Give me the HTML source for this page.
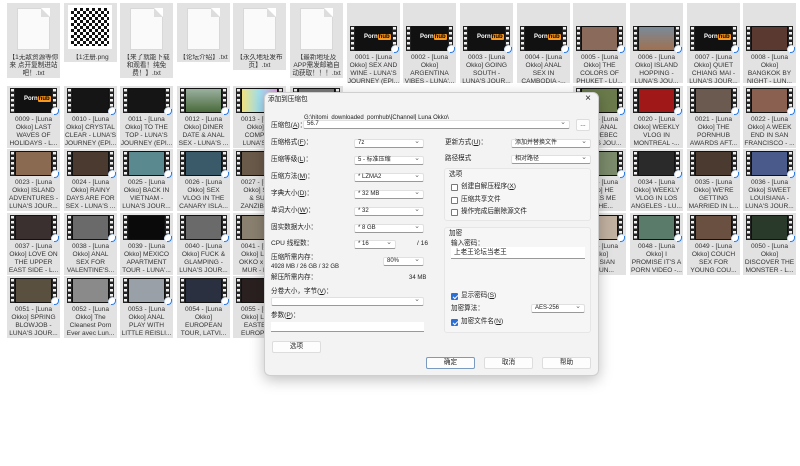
<!DOCTYPE html>
<html><head><meta charset="utf-8">
<style>
*{box-sizing:border-box}
body{margin:0;width:800px;height:466px;background:#fff;position:relative;overflow:hidden;font-family:"Liberation Sans","Noto Sans CJK SC",sans-serif;color:#333}
.t{position:absolute;width:53px;height:62px;background:#e2e2e2}
.th{position:absolute;left:3px;top:2px;width:47px;height:25px;background:#111}
.th:before,.th:after{content:"";position:absolute;top:0;width:5px;height:25px;background:#222 repeating-linear-gradient(to bottom,#222 0 1px,#eee 1px 3.5px,#222 3.5px 5px) no-repeat;background-size:3px 25px;background-position:1px 0}
.th:before{left:0}.th:after{right:0}
.th i{position:absolute;left:6px;right:6px;top:1px;bottom:1px}
.b{position:absolute;right:-3px;bottom:-3px;width:9px;height:9px;border-radius:50%;background:#fff;border:1px solid #cfe0f5;z-index:2}
.b:after{content:"";position:absolute;left:2px;top:1px;width:4px;height:5px;border-radius:0 0 4px 0;border:1.5px solid #2e7be0;border-left:none;border-top:none}
.ph{position:absolute;left:14px;top:8px;font:bold 6px "Liberation Sans",sans-serif;color:#fff}
.ph b{background:#f7971d;color:#000;padding:0 1px;border-radius:1px}
.t p{position:absolute;top:30px;left:0;width:53px;margin:0;text-align:center;font-size:6.6px;line-height:8px;white-space:nowrap;overflow:hidden}
.r1 .th{top:23px}.r1 p{top:51px}.r1{height:80px}
.doc{position:absolute;left:10px;top:5px;width:33px;height:42px;background:#fafafa;border:1px solid #d8d8d8}
.doc:after{content:"";position:absolute;right:-1px;top:-1px;border-style:solid;border-width:0 9px 9px 0;border-color:#fff #fff #ddd #ddd}
.dg{position:absolute;left:264px;top:92px;width:335px;height:284px;background:#f3f3f3;border:1px solid #cfcfcf;border-radius:6px;box-shadow:0 4px 14px rgba(0,0,0,.25);font-size:6.6px;color:#222;z-index:10}
.dg span,.dg div{position:absolute}
.l{white-space:nowrap;line-height:8px;margin-top:-3px}
.dd{height:9px;background:#fff;border:1px solid #e0e0e0;border-bottom-color:#999;border-radius:2px;padding-left:3px;line-height:7px;font-size:6px}
.dd:after{content:"⌄";position:absolute;right:3px;top:-2px;font-size:7px;color:#666}
.btn{height:12px;background:#fdfdfd;border:1px solid #ddd;border-radius:2px;text-align:center;line-height:10px}
.grp{border:1px solid #e6e6e6;border-radius:3px;background:#f6f6f6}
.cb{width:7px;height:7px;border:1px solid #777;border-radius:1px;background:#fff}
.cb.on{background:#2b6fd6;border-color:#2b6fd6}
.cb.on:after{content:"";position:absolute;left:1.5px;top:0;width:2px;height:4px;border:solid #fff;border-width:0 1px 1px 0;transform:rotate(45deg)}
</style></head><body>

<div class="t" style="left:7px;top:3px;height:75px"><div class="doc"></div><p style="top:51px">【1无敌资源等你<br>来 点开复制进站<br>吧！.txt</p></div>
<div class="t" style="left:64px;top:3px;height:59px"><div style="position:absolute;left:4px;top:2px;width:44px;height:44px;background:repeating-conic-gradient(#111 0 25%,#fff 0 50%) 0 0/6px 6px;border:3px solid #fff"></div><p style="top:51px">【1注册.png</p></div>
<div class="t" style="left:120px;top:3px;height:75px"><div class="doc"></div><p style="top:51px">【来了就能下载<br>和观看！纯免<br>费！】.txt</p></div>
<div class="t" style="left:177px;top:3px;height:59px"><div class="doc"></div><p style="top:51px">【论坛介绍】.txt</p></div>
<div class="t" style="left:233px;top:3px;height:67px"><div class="doc"></div><p style="top:51px">【永久地址发布<br>页】.txt</p></div>
<div class="t" style="left:290px;top:3px;height:75px"><div class="doc"></div><p style="top:51px">【最新地址及<br>APP需发邮箱自<br>动获取！！！.txt</p></div>
<div class="t r1" style="left:347px;top:3px"><div class="th"><span class="ph">Porn<b>hub</b></span><span class="b"></span></div><p>0001 - [Luna<br>Okko] SEX AND<br>WINE - LUNA'S<br>JOURNEY (EPI...</p></div>
<div class="t r1" style="left:403px;top:3px"><div class="th"><span class="ph">Porn<b>hub</b></span><span class="b"></span></div><p>0002 - [Luna<br>Okko]<br>ARGENTINA<br>VIBES - LUNA'...</p></div>
<div class="t r1" style="left:460px;top:3px"><div class="th"><span class="ph">Porn<b>hub</b></span><span class="b"></span></div><p>0003 - [Luna<br>Okko] GOING<br>SOUTH -<br>LUNA'S JOUR...</p></div>
<div class="t r1" style="left:517px;top:3px"><div class="th"><span class="ph">Porn<b>hub</b></span><span class="b"></span></div><p>0004 - [Luna<br>Okko] ANAL<br>SEX IN<br>CAMBODIA -...</p></div>
<div class="t r1" style="left:573px;top:3px"><div class="th"><i style="background:#8a6a5a"></i><span class="b"></span></div><p>0005 - [Luna<br>Okko] THE<br>COLORS OF<br>PHUKET - LU...</p></div>
<div class="t r1" style="left:630px;top:3px"><div class="th"><i style="background:linear-gradient(#7a8a9a,#a07050)"></i><span class="b"></span></div><p>0006 - [Luna<br>Okko] ISLAND<br>HOPPING -<br>LUNA'S JOU...</p></div>
<div class="t r1" style="left:687px;top:3px"><div class="th"><span class="ph">Porn<b>hub</b></span><span class="b"></span></div><p>0007 - [Luna<br>Okko] QUIET<br>CHIANG MAI -<br>LUNA'S JOUR...</p></div>
<div class="t r1" style="left:743px;top:3px"><div class="th"><i style="background:#5a3a30"></i><span class="b"></span></div><p>0008 - [Luna<br>Okko]<br>BANGKOK BY<br>NIGHT - LUN...</p></div>

<div class="t" style="left:7px;top:86px"><div class="th"><span class="ph">Porn<b>hub</b></span><span class="b"></span></div><p>0009 - [Luna<br>Okko] LAST<br>WAVES OF<br>HOLIDAYS - L...</p></div>
<div class="t" style="left:64px;top:86px"><div class="th"><i style="background:#151515"></i><span class="b"></span></div><p>0010 - [Luna<br>Okko] CRYSTAL<br>CLEAR - LUNA'S<br>JOURNEY (EPI...</p></div>
<div class="t" style="left:120px;top:86px"><div class="th"><i style="background:#151515"></i><span class="b"></span></div><p>0011 - [Luna<br>Okko] TO THE<br>TOP - LUNA'S<br>JOURNEY (EPI...</p></div>
<div class="t" style="left:177px;top:86px"><div class="th"><i style="background:linear-gradient(#9ab0a0,#4a6a3a)"></i><span class="b"></span></div><p>0012 - [Luna<br>Okko] DINER<br>DATE &amp; ANAL<br>SEX - LUNA'S ...</p></div>
<div class="t" style="left:233px;top:86px"><div class="th"><i style="background:linear-gradient(90deg,#f0e080,#a0e0f0,#e0a0e0)"></i><span class="b"></span></div><p>0013 - [Luna<br>Okko] DI<br>COMPILA<br>LUNA'S J...</p></div>
<div class="t" style="left:290px;top:86px"><div class="th"><i style="background:#777"></i></div></div>
<div class="t" style="left:573px;top:86px"><div class="th"><i style="background:#6a7a4a"></i><span class="b"></span></div><p>0019 - [Luna<br>Okko] ANAL<br>IN QUEBEC<br>LUNA'S JOU...</p></div>
<div class="t" style="left:630px;top:86px"><div class="th"><i style="background:#a01818"></i><span class="b"></span></div><p>0020 - [Luna<br>Okko] WEEKLY<br>VLOG IN<br>MONTREAL -...</p></div>
<div class="t" style="left:687px;top:86px"><div class="th"><i style="background:#6a5a50"></i><span class="b"></span></div><p>0021 - [Luna<br>Okko] THE<br>PORNHUB<br>AWARDS AFT...</p></div>
<div class="t" style="left:743px;top:86px"><div class="th"><i style="background:#8a6050"></i><span class="b"></span></div><p>0022 - [Luna<br>Okko] A WEEK<br>END IN SAN<br>FRANCISCO - ...</p></div>

<div class="t" style="left:7px;top:149px"><div class="th"><i style="background:#8a6a50"></i><span class="b"></span></div><p>0023 - [Luna<br>Okko] ISLAND<br>ADVENTURES -<br>LUNA'S JOUR...</p></div>
<div class="t" style="left:64px;top:149px"><div class="th"><i style="background:#4a3a30"></i><span class="b"></span></div><p>0024 - [Luna<br>Okko] RAINY<br>DAYS ARE FOR<br>SEX - LUNA'S ...</p></div>
<div class="t" style="left:120px;top:149px"><div class="th"><i style="background:#5a8a90"></i><span class="b"></span></div><p>0025 - [Luna<br>Okko] BACK IN<br>VIETNAM -<br>LUNA'S JOUR...</p></div>
<div class="t" style="left:177px;top:149px"><div class="th"><i style="background:#3a5a6a"></i><span class="b"></span></div><p>0026 - [Luna<br>Okko] SEX<br>VLOG IN THE<br>CANARY ISLA...</p></div>
<div class="t" style="left:233px;top:149px"><div class="th"><i style="background:#6a5a4a"></i><span class="b"></span></div><p>0027 - [Luna<br>Okko] SEX<br>&amp; SUN<br>ZANZIBAR...</p></div>
<div class="t" style="left:573px;top:149px"><div class="th"><i style="background:#7a8a6a"></i><span class="b"></span></div><p>0033 - [Luna<br>Okko] HE<br>TAKES ME<br>IN THE...</p></div>
<div class="t" style="left:630px;top:149px"><div class="th"><i style="background:#2a2a2a"></i><span class="b"></span></div><p>0034 - [Luna<br>Okko] WEEKLY<br>VLOG IN LOS<br>ANGELES - LU...</p></div>
<div class="t" style="left:687px;top:149px"><div class="th"><i style="background:#4a3a30"></i><span class="b"></span></div><p>0035 - [Luna<br>Okko] WE'RE<br>GETTING<br>MARRIED IN L...</p></div>
<div class="t" style="left:743px;top:149px"><div class="th"><i style="background:#4a5a8a"></i><span class="b"></span></div><p>0036 - [Luna<br>Okko] SWEET<br>LOUISIANA -<br>LUNA'S JOUR...</p></div>

<div class="t" style="left:7px;top:213px"><div class="th"><i style="background:#3a3030"></i><span class="b"></span></div><p>0037 - [Luna<br>Okko] LOVE ON<br>THE UPPER<br>EAST SIDE - L...</p></div>
<div class="t" style="left:64px;top:213px"><div class="th"><i style="background:#6a6a6a"></i><span class="b"></span></div><p>0038 - [Luna<br>Okko] ANAL<br>SEX FOR<br>VALENTINE'S...</p></div>
<div class="t" style="left:120px;top:213px"><div class="th"><i style="background:#0a0a0a"></i><span class="b"></span></div><p>0039 - [Luna<br>Okko] MEXICO<br>APARTMENT<br>TOUR - LUNA'...</p></div>
<div class="t" style="left:177px;top:213px"><div class="th"><i style="background:#6a6a6a"></i><span class="b"></span></div><p>0040 - [Luna<br>Okko] FUCK &amp;<br>GLAMPING -<br>LUNA'S JOUR...</p></div>
<div class="t" style="left:233px;top:213px"><div class="th"><i style="background:#8a8070"></i><span class="b"></span></div><p>0041 - [Luna<br>Okko] LUNA<br>OKKO x MUR<br>MUR - LU...</p></div>
<div class="t" style="left:573px;top:213px"><div class="th"><i style="background:#c0b0a0"></i><span class="b"></span></div><p>0047 - [Luna<br>Okko]<br>LOUISIAN<br>S - LUN...</p></div>
<div class="t" style="left:630px;top:213px"><div class="th"><i style="background:#5a7a6a"></i><span class="b"></span></div><p>0048 - [Luna<br>Okko] I<br>PROMISE IT'S A<br>PORN VIDEO -...</p></div>
<div class="t" style="left:687px;top:213px"><div class="th"><i style="background:#6a5040"></i><span class="b"></span></div><p>0049 - [Luna<br>Okko] COUCH<br>SEX FOR<br>YOUNG COU...</p></div>
<div class="t" style="left:743px;top:213px"><div class="th"><i style="background:#2a3a2a"></i><span class="b"></span></div><p>0050 - [Luna<br>Okko]<br>DISCOVER THE<br>MONSTER - L...</p></div>

<div class="t" style="left:7px;top:276px"><div class="th"><i style="background:#5a5040"></i><span class="b"></span></div><p>0051 - [Luna<br>Okko] SPRING<br>BLOWJOB -<br>LUNA'S JOUR...</p></div>
<div class="t" style="left:64px;top:276px"><div class="th"><i style="background:#8a8a8a"></i><span class="b"></span></div><p>0052 - [Luna<br>Okko] The<br>Cleanest Porn<br>Ever avec Lun...</p></div>
<div class="t" style="left:120px;top:276px"><div class="th"><i style="background:#9aa0a8"></i><span class="b"></span></div><p>0053 - [Luna<br>Okko] ANAL<br>PLAY WITH<br>LITTLE REISLI...</p></div>
<div class="t" style="left:177px;top:276px"><div class="th"><i style="background:#2a3040"></i><span class="b"></span></div><p>0054 - [Luna<br>Okko]<br>EUROPEAN<br>TOUR, LATVI...</p></div>
<div class="t" style="left:233px;top:276px"><div class="th"><i style="background:#2a2020"></i><span class="b"></span></div><p>0055 - [Luna<br>Okko] LUNA<br>EASTERN<br>EUROPE, ...</p></div>

<div class="dg">
<span class="l" style="left:3px;top:6px">添加到压缩包</span>
<span style="right:7px;top:0px;font-size:10px">×</span>
<span class="l" style="left:6px;top:32px">压缩包(<u>A</u>)：</span>
<span class="l" style="left:39px;top:24px;font-size:6px">G:\hitomi_downloaded_pornhub\[Channel] Luna Okko\</span>
<div class="dd" style="left:38px;top:27px;width:267px">56.7</div>
<div class="btn" style="left:311px;top:26px;width:14px">...</div>

<span class="l" style="left:6px;top:49px">压缩格式(<u>F</u>)：</span>
<div class="dd" style="left:89px;top:46px;width:70px">7z</div>
<span class="l" style="left:6px;top:66px">压缩等级(<u>L</u>)：</span>
<div class="dd" style="left:89px;top:63px;width:70px">5 - 标准压缩</div>
<span class="l" style="left:6px;top:83px">压缩方法(<u>M</u>)：</span>
<div class="dd" style="left:89px;top:80px;width:70px">* LZMA2</div>
<span class="l" style="left:6px;top:100px">字典大小(<u>D</u>)：</span>
<div class="dd" style="left:89px;top:97px;width:70px">* 32 MB</div>
<span class="l" style="left:6px;top:117px">单词大小(<u>W</u>)：</span>
<div class="dd" style="left:89px;top:114px;width:70px">* 32</div>
<span class="l" style="left:6px;top:134px">固实数据大小：</span>
<div class="dd" style="left:89px;top:131px;width:70px">* 8 GB</div>
<span class="l" style="left:6px;top:150px">CPU 线程数：</span>
<div class="dd" style="left:89px;top:147px;width:42px">* 16</div>
<span class="l" style="left:152px;top:150px">/ 16</span>
<span class="l" style="left:6px;top:164px">压缩所需内存：</span>
<span class="l" style="left:6px;top:173px;font-size:6px">4928 MB / 26 GB / 32 GB</span>
<div class="dd" style="left:118px;top:164px;width:41px">80%</div>
<span class="l" style="left:6px;top:184px">解压所需内存：</span>
<span class="l" style="left:144px;top:184px;font-size:6px">34 MB</span>
<span class="l" style="left:6px;top:198px">分卷大小，字节(<u>V</u>)：</span>
<div class="dd" style="left:6px;top:204px;width:153px"></div>
<span class="l" style="left:6px;top:222px">参数(<u>P</u>)：</span>
<div style="left:6px;top:229px;width:153px;height:10px;background:#fff;border-bottom:1px solid #999"></div>
<div class="btn" style="left:7px;top:248px;width:49px">选项</div>

<span class="l" style="left:180px;top:49px">更新方式(<u>U</u>)：</span>
<div class="dd" style="left:246px;top:46px;width:80px">添加并替换文件</div>
<span class="l" style="left:180px;top:65px">路径模式</span>
<div class="dd" style="left:246px;top:62px;width:80px">相对路径</div>

<div class="grp" style="left:179px;top:75px;width:147px;height:53px"></div>
<span class="l" style="left:184px;top:81px">选项</span>
<div class="cb" style="left:186px;top:91px"></div><span class="l" style="left:196px;top:93px">创建自解压程序(<u>X</u>)</span>
<div class="cb" style="left:186px;top:104px"></div><span class="l" style="left:196px;top:106px">压缩共享文件</span>
<div class="cb" style="left:186px;top:116px"></div><span class="l" style="left:196px;top:118px">操作完成后删除源文件</span>

<div class="grp" style="left:179px;top:134px;width:147px;height:106px"></div>
<span class="l" style="left:184px;top:140px">加密</span>
<span class="l" style="left:186px;top:150px">输入密码：</span>
<div style="left:186px;top:154px;width:134px;height:12px;background:#fff;border-bottom:1px solid #999;font-size:6.6px;line-height:12px;padding-left:3px">上老王论坛当老王</div>
<div class="cb on" style="left:186px;top:200px"></div><span class="l" style="left:196px;top:202px">显示密码(<u>S</u>)</span>
<span class="l" style="left:186px;top:215px">加密算法：</span>
<div class="dd" style="left:266px;top:211px;width:54px">AES-256</div>
<div class="cb on" style="left:186px;top:226px"></div><span class="l" style="left:196px;top:228px">加密文件名(<u>N</u>)</span>

<div class="btn" style="left:161px;top:264px;width:49px;border-color:#7a9ac0">确定</div>
<div class="btn" style="left:219px;top:264px;width:49px">取消</div>
<div class="btn" style="left:277px;top:264px;width:49px">帮助</div>
</div>
</body></html>
